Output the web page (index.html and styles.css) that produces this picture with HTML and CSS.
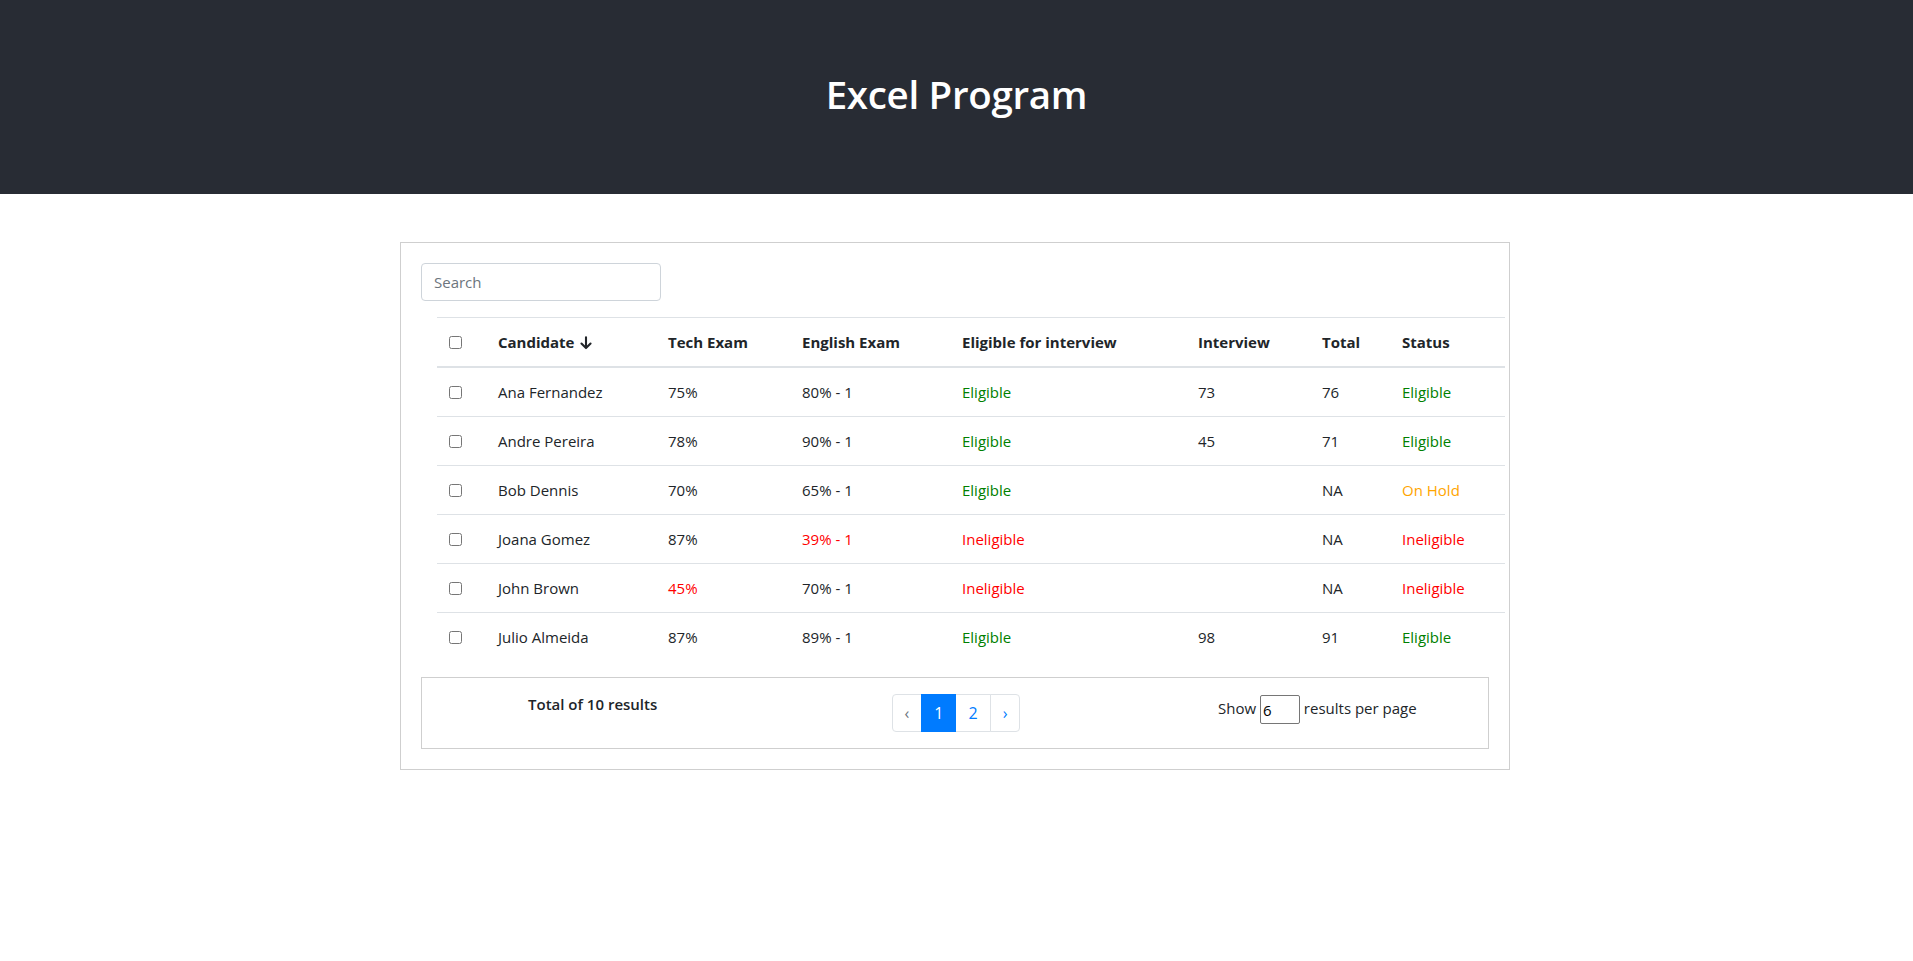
FILE: index.html
```html
<!DOCTYPE html>
<html lang="en">
<head>
<meta charset="utf-8">
<title>Excel Program</title>
<link rel="stylesheet" href="styles.css">
</head>
<body>
<header class="app-header">
  <h1 class="app-title">Excel Program</h1>
</header>
<main class="container">
  <section class="card">
    <input class="search" type="text" placeholder="Search">
    <table class="grid">
      <thead>
        <tr>
          <th class="c-check"><input type="checkbox" class="chk"></th>
          <th class="c-name">Candidate <svg class="sort-icon" viewBox="0 0 16 16" width="14" height="14" aria-hidden="true"><path d="M8 1.5 V13.5 M2.8 8.6 L8 13.8 L13.2 8.6" fill="none" stroke="#212529" stroke-width="2.4" stroke-linecap="round" stroke-linejoin="round"/></svg></th>
          <th class="c-tech">Tech Exam</th>
          <th class="c-eng">English Exam</th>
          <th class="c-elig">Eligible for interview</th>
          <th class="c-int">Interview</th>
          <th class="c-total">Total</th>
          <th class="c-status">Status</th>
        </tr>
      </thead>
      <tbody>
        <tr>
          <td><input type="checkbox" class="chk"></td>
          <td>Ana Fernandez</td><td>75%</td><td>80% - 1</td>
          <td class="ok">Eligible</td><td>73</td><td>76</td><td class="ok">Eligible</td>
        </tr>
        <tr>
          <td><input type="checkbox" class="chk"></td>
          <td>Andre Pereira</td><td>78%</td><td>90% - 1</td>
          <td class="ok">Eligible</td><td>45</td><td>71</td><td class="ok">Eligible</td>
        </tr>
        <tr>
          <td><input type="checkbox" class="chk"></td>
          <td>Bob Dennis</td><td>70%</td><td>65% - 1</td>
          <td class="ok">Eligible</td><td></td><td>NA</td><td class="hold">On Hold</td>
        </tr>
        <tr>
          <td><input type="checkbox" class="chk"></td>
          <td>Joana Gomez</td><td>87%</td><td class="bad">39% - 1</td>
          <td class="bad">Ineligible</td><td></td><td>NA</td><td class="bad">Ineligible</td>
        </tr>
        <tr>
          <td><input type="checkbox" class="chk"></td>
          <td>John Brown</td><td class="bad">45%</td><td>70% - 1</td>
          <td class="bad">Ineligible</td><td></td><td>NA</td><td class="bad">Ineligible</td>
        </tr>
        <tr>
          <td><input type="checkbox" class="chk"></td>
          <td>Julio Almeida</td><td>87%</td><td>89% - 1</td>
          <td class="ok">Eligible</td><td>98</td><td>91</td><td class="ok">Eligible</td>
        </tr>
      </tbody>
    </table>
    <div class="table-footer">
      <div class="f-col f-total">Total of 10 results</div>
      <div class="f-col f-pages">
        <ul class="pagination">
          <li class="page-item disabled"><span class="page-link">‹</span></li>
          <li class="page-item active"><span class="page-link">1</span></li>
          <li class="page-item"><span class="page-link">2</span></li>
          <li class="page-item"><span class="page-link">›</span></li>
        </ul>
      </div>
      <div class="f-col f-show">Show <input class="per-page" type="text" value="6"> results per page</div>
    </div>
  </section>
</main>
</body>
</html>
```
FILE: styles.css
```css
* { box-sizing: border-box; }

body {
  margin: 0;
  font-family: "Open Sans", "Noto Sans", sans-serif;
  font-size: 15px;
  line-height: 24px;
  color: #212529;
  background: #fff;
}

.app-header {
  height: 194px;
  background: #282c34;
  display: flex;
  align-items: center;
  justify-content: center;
  padding-bottom: 5px;
}

.app-title {
  margin: 0;
  color: #fff;
  font-size: 38.5px;
  font-weight: 600;
  line-height: 1.2;
  letter-spacing: -0.3px;
}

.container {
  width: 1110px;
  margin: 48px 0 0 calc(50% - 556.5px);
}

.card {
  border: 1px solid #cfcfcf;
  padding: 20px;
}

.search {
  display: block;
  width: 240px;
  height: 38px;
  padding: 6px 12px;
  border: 1px solid #ced4da;
  border-radius: 4px;
  font: inherit;
  color: #495057;
}
.search::placeholder { color: #6c757d; }

.grid {
  width: 1068px;
  margin: 16px 0 0 16px;
  border-collapse: collapse;
  table-layout: fixed;
}

.grid th,
.grid td {
  padding: 12px;
  text-align: left;
  vertical-align: top;
  border-top: 1px solid #dee2e6;
}

.grid th {
  font-weight: 700;
  border-bottom: 2px solid #dee2e6;
}

.grid tbody tr:first-child td { border-top: 0; }

.c-check { width: 49px; }
.c-name { width: 170px; }
.c-tech { width: 134px; }
.c-eng { width: 160px; }
.c-elig { width: 236px; }
.c-int { width: 124px; }
.c-total { width: 80px; }
.c-status { width: 115px; }

.chk {
  width: 13px;
  height: 13px;
  margin: 0;
  vertical-align: -1px;
}

.sort-icon {
  margin-left: 1px;
  vertical-align: -2px;
}

.ok { color: #008000; }
.bad { color: #ff0000; }
.hold { color: #ffa500; }

.table-footer {
  margin-top: 16px;
  border: 1px solid #cfcfcf;
  display: flex;
  padding-top: 16px;
}

.f-col {
  flex: 1;
  text-align: center;
}

.f-total {
  font-weight: 600;
  margin-top: -2px;
  padding-right: 22px;
}

.f-pages {
  display: flex;
  justify-content: center;
}

.f-show {
  padding-top: 1px;
  padding-left: 20px;
}

.pagination {
  display: flex;
  list-style: none;
  margin: 0 0 16px;
  padding: 0;
}

.page-link {
  display: block;
  padding: 8px 12px;
  line-height: 20px;
  font-size: 16px;
  color: #007bff;
  background: #fff;
  border: 1px solid #dee2e6;
  margin-left: -1px;
}

.page-item:first-child .page-link {
  margin-left: 0;
  border-radius: 4px 0 0 4px;
}

.page-item:last-child .page-link {
  border-radius: 0 4px 4px 0;
}

.page-item.disabled .page-link { color: #6c757d; }

.page-item.active .page-link {
  background: #007bff;
  border-color: #007bff;
  color: #fff;
  position: relative;
}

.per-page {
  width: 40px;
  height: 29px;
  padding: 1px 2px;
  border: 1px solid #767676;
  border-radius: 2px;
  font: inherit;
  color: #000;
  vertical-align: middle;
}
```
